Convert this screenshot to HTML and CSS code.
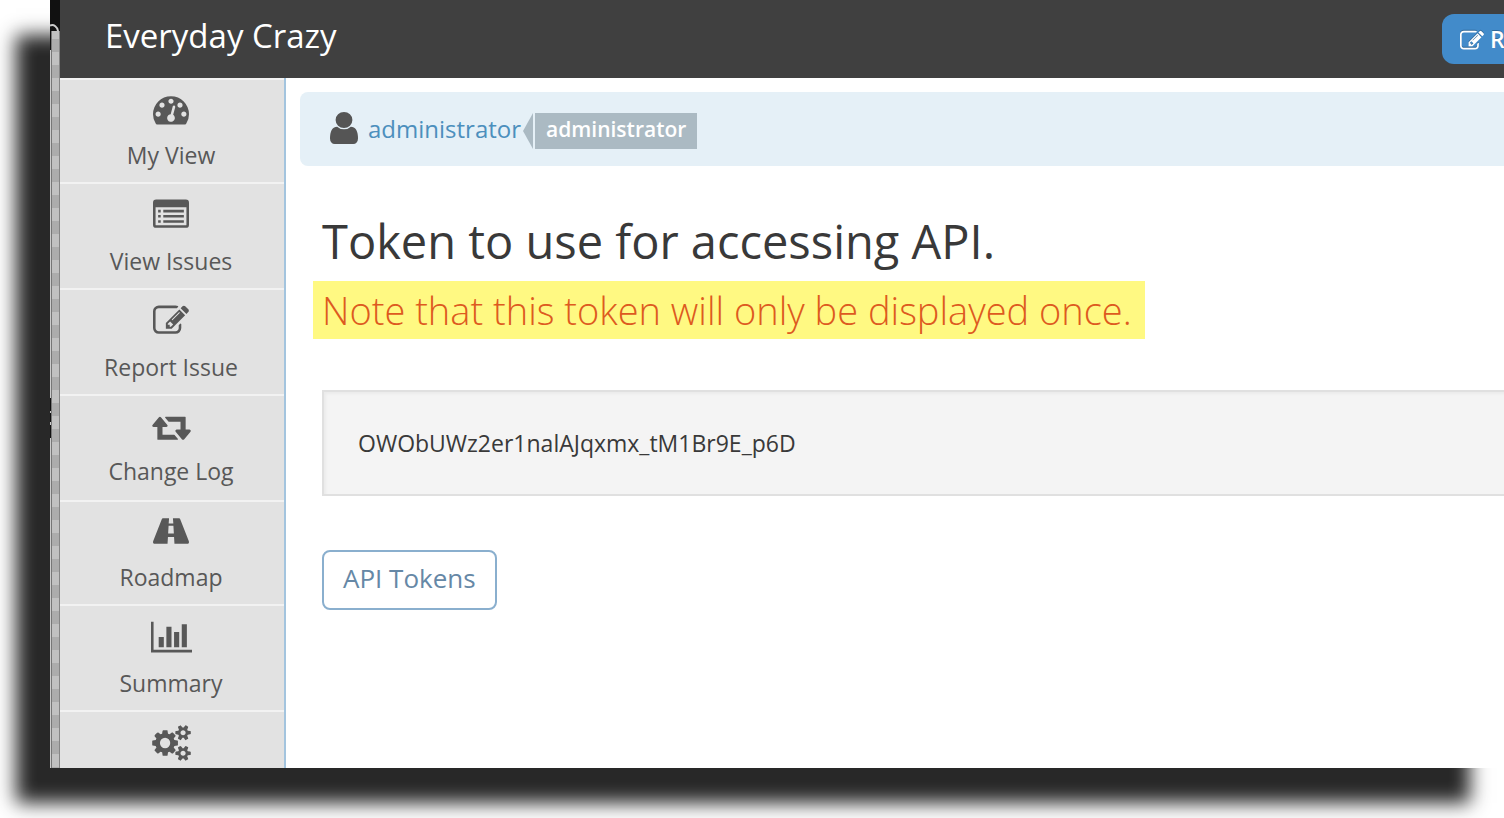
FILE: index.html
```html
<!DOCTYPE html>
<html lang="en">
<head>
<meta charset="utf-8">
<title>Everyday Crazy</title>
<link rel="stylesheet" href="styles.css">
</head>
<body>
<svg class="sprite" aria-hidden="true">
  <symbol id="edit" viewBox="0 0 1792 1792"><path d="M888 1184l116-116-152-152-116 116v56h96v96h56zm440-720q-16-16-33 1l-350 350q-17 17-1 33t33-1l350-350q17-17 1-33zm80 594v190q0 119-84.500 203.500t-203.500 84.500h-832q-119 0-203.500-84.500t-84.500-203.500v-832q0-119 84.500-203.500t203.500-84.500h832q63 0 117 25 15 7 18 23 3 17-9 29l-49 49q-14 14-32 8-23-6-45-6h-832q-66 0-113 47t-47 113v832q0 66 47 113t113 47h832q66 0 113-47t47-113v-126q0-13 9-22l64-64q15-15 35-7t20 29zm-96-738l288 288-672 672h-288v-288zm444 132l-92 92-288-288 92-92q28-28 68-28t68 28l152 152q28 28 28 68t-28 68z"/></symbol>
</svg>
<div class="window">
  <div class="edge"><svg class="edge-mark" viewBox="0 0 10 31" aria-hidden="true"><path d="M0 25.500C4 24 7.500 27 8 31"/></svg></div>
  <div class="app">
    <header class="navbar">
      <a class="brand" href="#">Everyday Crazy</a>
      <button class="report" type="button"><svg viewBox="0 0 1792 1792" aria-hidden="true"><use href="#edit"/></svg><span>R</span></button>
    </header>
    <div class="body">
      <nav class="sidebar">
        <a class="item short" href="#"><svg viewBox="0 0 1792 1792" aria-hidden="true"><path d="M384 1152q0-53-37.500-90.500t-90.500-37.500-90.500 37.500-37.500 90.500 37.500 90.500 90.500 37.500 90.500-37.500 37.500-90.500zm192-448q0-53-37.500-90.500t-90.500-37.500-90.500 37.500-37.500 90.500 37.500 90.500 90.500 37.500 90.500-37.500 37.500-90.500zm428 481l101-382q6-26-7.500-48.500t-38.500-29.500-48 6.500-30 39.500l-101 382q-60 5-107 43.500t-63 98.500q-20 77 20 146t117 89 146-20 89-117q16-60-6-117t-72-91zm660-33q0-53-37.500-90.500t-90.500-37.500-90.500 37.500-37.500 90.500 37.500 90.500 90.500 37.500 90.500-37.500 37.500-90.500zm-640-640q0-53-37.500-90.500t-90.500-37.500-90.500 37.500-37.500 90.500 37.500 90.500 90.500 37.500 90.500-37.500 37.500-90.500zm448 192q0-53-37.500-90.500t-90.500-37.500-90.500 37.500-37.500 90.500 37.500 90.500 90.500 37.500 90.500-37.500 37.500-90.500zm320 448q0 261-141 483-19 29-54 29h-1402q-35 0-54-29-141-221-141-483 0-182 71-348t191-286 286-191 348-71 348 71 286 191 191 286 71 348z"/></svg><span>My View</span></a>
        <a class="item" href="#"><svg viewBox="0 0 1792 1792" aria-hidden="true"><path fill-rule="evenodd" d="M160 128h1472a160 160 0 0 1 160 160v1088a160 160 0 0 1-160 160h-1472a160 160 0 0 1-160-160v-1088a160 160 0 0 1 160-160zM128 512v864a32 32 0 0 0 32 32h1472a32 32 0 0 0 32-32v-864zM256 640h128v128h-128zM512 640h1024v128h-1024zM256 896h128v128h-128zM512 896h1024v128h-1024zM256 1152h128v128h-128zM512 1152h1024v128h-1024z"/></svg><span>View Issues</span></a>
        <a class="item" href="#"><svg viewBox="0 0 1792 1792" aria-hidden="true"><use href="#edit"/></svg><span>Report Issue</span></a>
        <a class="item raised" href="#"><svg class="wide" viewBox="0 0 1920 1792" aria-hidden="true"><path d="M1280 1504q0 13-9.500 22.500t-22.500 9.500h-960q-20 0-27-12-5-6-5-20v-608h-192q-26 0-45-19t-19-45q0-24 15-41l320-384q19-22 49-22t49 22l320 384q15 17 15 41 0 26-19 45t-45 19h-192v384h576q16 0 25 11l160 192q7 10 7 21zm640-416q0 24-15 41l-320 384q-20 23-49 23t-49-23l-320-384q-15-17-15-41 0-26 19-45t45-19h192v-384h-576q-16 0-25-12l-160-192q-7-9-7-20 0-13 9.500-22.500t22.500-9.500h960q20 0 27 12 5 6 5 20v608h192q26 0 45 19t19 45z"/></svg><span>Change Log</span></a>
        <a class="item short" href="#"><svg viewBox="0 0 1792 1792" aria-hidden="true"><path fill-rule="evenodd" d="M490 256H1302Q1334 256 1350 296L1785 1400Q1810 1536 1740 1536H52Q-18 1536 7 1400L442 296Q458 256 490 256zM800 256L780 520H1012L992 256zM776 630L754 1020H1038L1016 630zM744 1190L724 1536H1068L1048 1190z"/></svg><span>Roadmap</span></a>
        <a class="item" href="#"><svg class="wide chart" viewBox="0 0 2048 1792" aria-hidden="true"><path d="M640 896v512h-256v-512zM1024 384v1024h-256v-1024zM2048 1536v128h-2048v-1536h128v1408zM1408 640v768h-256v-768zM1792 256v1152h-256v-1152z"/></svg><span>Summary</span></a>
        <a class="item" href="#" aria-label="Settings"><svg class="wide" viewBox="0 0 1920 1792" aria-hidden="true"><path d="M896 896q0-106-75-181t-181-75-181 75-75 181 75 181 181 75 181-75 75-181zm768 512q0-52-38-90t-90-38-90 38-38 90q0 53 37.500 90.500t90.500 37.500 90.500-37.500 37.500-90.500zm0-1024q0-52-38-90t-90-38-90 38-38 90q0 53 37.500 90.500t90.500 37.500 90.500-37.500 37.500-90.500zm-384 421v185q0 10-7 19.500t-16 10.500l-155 24q-11 35-32 76 34 48 90 115 7 11 7 20 0 12-7 19-23 30-82.500 89.500t-78.500 59.500q-11 0-21-7l-115-90q-37 19-77 31-11 108-23 155-7 24-30 24h-186q-11 0-20-7.500t-10-17.500l-23-153q-34-10-75-31l-118 89q-7 7-20 7-11 0-21-8-144-133-144-160 0-9 7-19 10-14 41-53t47-61q-23-44-35-82l-152-24q-10-1-17-9.500t-7-19.500v-185q0-10 7-19.500t16-10.500l155-24q11-35 32-76-34-48-90-115-7-11-7-20 0-12 7-20 22-30 82-89t79-59q11 0 21 7l115 90q34-18 77-32 11-108 23-154 7-24 30-24h186q11 0 20 7.500t10 17.500l23 153q34 10 75 31l118-89q8-7 20-7 11 0 21 8 144 133 144 160 0 8-7 19-12 16-42 54t-45 60q23 48 34 82l152 23q10 2 17 10.500t7 19.500zm640 533v140q0 16-149 31-12 27-30 52 51 113 51 138 0 4-4 7-122 71-124 71-8 0-46-47t-52-68q-20 2-30 2t-30-2q-14 21-52 68t-46 47q-2 0-124-71-4-3-4-7 0-25 51-138-18-25-30-52-149-15-149-31v-140q0-16 149-31 13-29 30-52-51-113-51-138 0-4 4-7 4-2 35-20t59-34 30-16q8 0 46 46.500t52 67.500q20-2 30-2t30 2q51-71 92-112l6-2q4 0 124 70 4 3 4 7 0 25-51 138 17 23 30 52 149 15 149 31zm0-1024v140q0 16-149 31-12 27-30 52 51 113 51 138 0 4-4 7-122 71-124 71-8 0-46-47t-52-68q-20 2-30 2t-30-2q-14 21-52 68t-46 47q-2 0-124-71-4-3-4-7 0-25 51-138-18-25-30-52-149-15-149-31v-140q0-16 149-31 13-29 30-52-51-113-51-138 0-4 4-7 4-2 35-20t59-34 30-16q8 0 46 46.500t52 67.500q20-2 30-2t30 2q51-71 92-112l6-2q4 0 124 70 4 3 4 7 0 25-51 138 17 23 30 52 149 15 149 31z"/></svg></a>
      </nav>
      <main class="main">
        <div class="crumbs">
          <svg class="user" viewBox="256 128 1280 1536" preserveAspectRatio="none" aria-hidden="true"><path d="M1536 1399q0 109-62.500 187t-150.500 78h-854q-88 0-150.500-78t-62.500-187q0-85 8.500-160.500t31.500-152 58.500-131 94-89 134.500-34.500q131 128 313 128t313-128q76 0 134.500 34.500t94 89 58.500 131 31.500 152 8.500 160.500zm-256-887q0 159-112.500 271.500t-271.500 112.500-271.500-112.500-112.500-271.500 112.500-271.500 271.500-112.500 271.500 112.500 112.500 271.500z"/></svg>
          <a class="who" href="#">administrator</a>
          <span class="tag">administrator</span>
        </div>
        <section class="content">
          <h1 class="title">Token to use for accessing API.</h1>
          <p class="note">Note that this token will only be displayed once.</p>
          <div class="token">OWObUWz2er1nalAJqxmx_tM1Br9E_p6D</div>
          <button class="tokens" type="button">API Tokens</button>
        </section>
      </main>
    </div>
  </div>
</div>
</body>
</html>
```
FILE: styles.css
```css
* { box-sizing: border-box; }
html, body { height: 100%; }
body {
  margin: 0;
  padding: 0 0 50px 50px;
  overflow: hidden;
  background: #fff;
  font-family: "Open Sans", "Noto Sans", sans-serif;
  color: #393939;
}
a { color: inherit; text-decoration: none; }
button { font: inherit; cursor: pointer; }
svg { fill: currentColor; flex: none; }
.sprite { display: none; }

.window {
  display: flex;
  height: 100%;
  box-shadow: -34px 35px 18px #282828;
}
.edge {
  flex: none;
  width: 10px;
  background:
    linear-gradient(#111, #111) 0 0 / 10px 31px no-repeat,
    linear-gradient(#111, #111) 0 0 / 1px 50px no-repeat,
    linear-gradient(#111, #111) 0 398px / 1px 13px no-repeat,
    linear-gradient(#111, #111) 0 413px / 1px 9px no-repeat,
    linear-gradient(#111, #111) 0 425px / 1px 13px no-repeat,
    linear-gradient(90deg, #ccc 1px, #777 1px, #777 2px, transparent 2px, transparent 9px, #858585 9px),
    repeating-linear-gradient(#c1c1c1 0 13px, #acacac 13px 26px);
}
.edge-mark { display: block; width: 10px; height: 31px; fill: none; stroke: #ccc; stroke-width: 2; }
.app {
  flex: 1;
  min-width: 0;
  display: flex;
  flex-direction: column;
  overflow: hidden;
  background: #fff;
}

.navbar {
  flex: none;
  display: flex;
  justify-content: space-between;
  align-items: center;
  height: 78px;
  padding-left: 45px;
  background: #404040;
  color: #fff;
}
.brand { font-size: 33px; line-height: 46px; padding-bottom: 6px; }
.report {
  display: flex;
  align-items: center;
  gap: 6px;
  width: 62px;
  height: 50px;
  padding: 0 0 0 18px;
  border: 0;
  border-radius: 12px 0 0 12px;
  background: #428bca;
  color: #fff;
  font-size: 23px;
  font-weight: 600;
  text-shadow: 0 -1px 0 rgba(0, 0, 0, .25);
}
.report svg { width: 24px; height: 24px; margin-top: 4px; filter: drop-shadow(0 -1px 0 rgba(0, 0, 0, .25)); }

.body { flex: 1; min-height: 0; display: flex; }
.sidebar {
  flex: none;
  width: 226px;
  overflow: hidden;
  background: #e2e2e2;
  border-right: 2px solid #a3c4de;
}
.item {
  display: flex;
  flex-direction: column;
  align-items: center;
  justify-content: space-between;
  height: 106px;
  padding: 13px 2px 10px 0;
  border-top: 2px solid #f2f2f2;
  color: #585858;
  font-size: 23px;
  line-height: 34px;
}
.item.short { height: 104px; padding-top: 11px; }
.item.raised { padding-bottom: 12px; }
.item svg { width: 36px; height: 36px; }
.item .wide { width: 39px; }
.item .chart { width: 41px; }

.main { flex: 1; min-width: 0; padding: 14px 0 0 14px; }
.crumbs {
  display: flex;
  align-items: center;
  height: 74px;
  padding-left: 30px;
  border-radius: 8px 0 0 8px;
  background: #e5f0f7;
}
.user { width: 28px; height: 32px; margin-bottom: 2px; color: #555; }
.who { margin-left: 10px; color: #4c8fbd; font-size: 24px; line-height: 36px; }
.tag {
  position: relative;
  margin: 4px 0 0 14px;
  padding: 0 11px 4px;
  background: #abbac3;
  color: #fff;
  font-size: 21px;
  font-weight: 600;
  line-height: 32px;
}
.tag::before {
  content: "";
  position: absolute;
  left: -12px;
  top: 0;
  width: 10px;
  height: 36px;
  background: #abbac3;
  clip-path: polygon(100% 0, 100% 100%, 0 50%);
}

.content { padding: 42px 0 0 22px; }
.title { margin: 0; font-size: 47px; font-weight: 400; line-height: 66px; }
.note {
  width: fit-content;
  margin: 7px 0 0 -9px;
  padding: 0 13px 0 9px;
  background: #fff982;
  color: #dd5a20;
  font-size: 38px;
  font-weight: 300;
  line-height: 58px;
}
.token {
  margin-top: 51px;
  padding: 34px;
  border: 2px solid #e0e0e0;
  border-right: 0;
  background: #f4f4f4;
  box-shadow: inset 2px 2px 3px rgba(0, 0, 0, .04);
  font-size: 23px;
  line-height: 34px;
}
.tokens {
  margin-top: 54px;
  height: 60px;
  padding: 0 19px 4px;
  border: 2px solid #8aafce;
  border-radius: 8px;
  background: #fff;
  color: #6688a6;
  font-size: 26px;
}
```
